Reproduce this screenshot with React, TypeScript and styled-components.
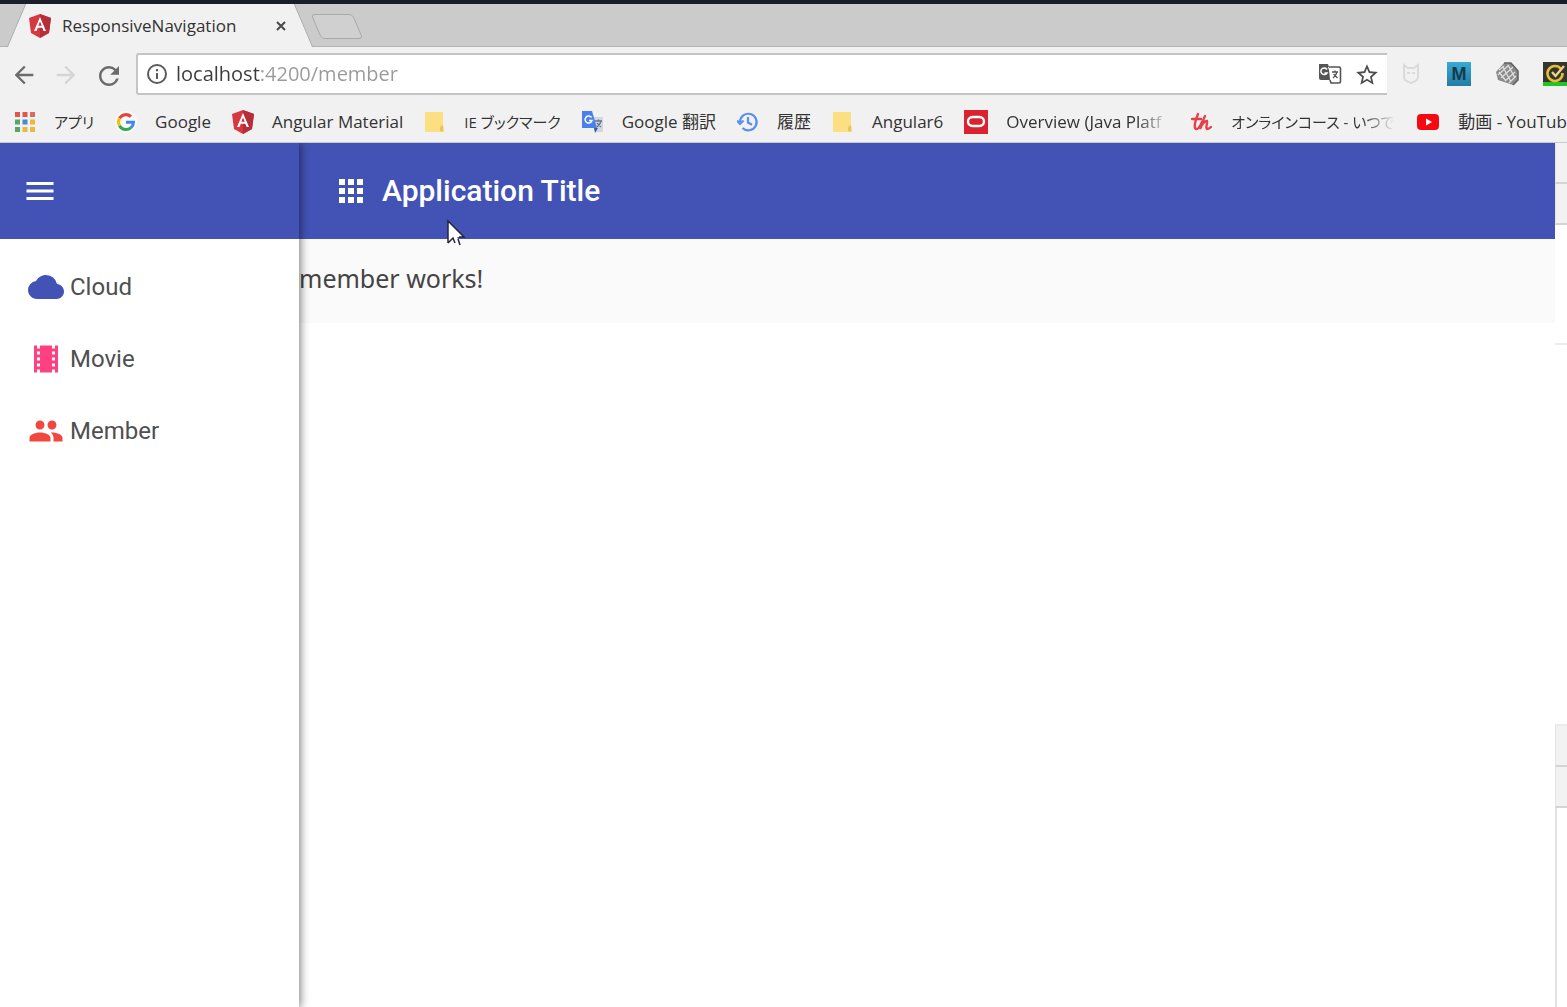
import React from "react";
import styled, { createGlobalStyle } from "styled-components";
import { MdApps, MdArrowBack, MdArrowForward, MdCloud, MdGroup, MdMenu, MdRefresh, MdStarBorder, MdTheaters } from "react-icons/md";

const chromeFont = `"Open Sans", "Noto Sans CJK JP", sans-serif`;
const appFont = `Roboto, "Liberation Sans", sans-serif`;

const GlobalStyle = createGlobalStyle`
  *, *::before, *::after { box-sizing: border-box; }
  body { margin: 0; background: #fff; overflow: hidden; }
  button { border: 0; padding: 0; background: none; font: inherit; color: inherit; cursor: pointer; }
  a { color: inherit; text-decoration: none; }
  p, h1 { margin: 0; }
  svg { display: block; flex: none; }
`;

const Window = styled.div`
  display: flex;
  flex-direction: column;
  min-height: 100vh;
  overflow: hidden;
  border-top: 4px solid #1b1d2b;
  font-family: ${chromeFont};
  color: #333;
`;

const TabStrip = styled.div`
  display: flex;
  height: 43px;
  padding-left: 16px;
  background: #cbcbcb;
  box-shadow: inset 0 -1px #b2b2b2;
`;

const Tab = styled.div`
  position: relative;
  z-index: 0;
  display: flex;
  align-items: center;
  width: 288px;
  padding: 0 15px 0 13px;
  font-size: 17px;

  &::before,
  &::after {
    content: "";
    position: absolute;
    z-index: -1;
    top: 0;
    bottom: 0;
    width: 60%;
    background: #f1f1f1;
  }
  &::before {
    left: 0;
    border-left: 1px solid #a5a5a5;
    transform: skewX(-23deg);
  }
  &::after {
    right: 0;
    border-right: 1px solid #a5a5a5;
    transform: skewX(23deg);
  }
`;

const TabTitle = styled.span`
  flex: 1;
  margin-left: 11px;
  white-space: nowrap;
`;

const CloseButton = styled.button`
  display: grid;
  place-items: center;
  width: 16px;
  height: 16px;
`;

const NewTab = styled.button`
  width: 42px;
  height: 25px;
  margin: 10px 0 0 12px;
  border: 1px solid #a9a9a9;
  border-radius: 4px;
  background: #d0d0d0;
  transform: skewX(23deg);
`;

const Toolbar = styled.div`
  display: flex;
  align-items: center;
  height: 54px;
  padding-left: 10px;
  background: #f1f1f1;
`;

const NavButton = styled.button<{ $dim?: boolean }>`
  display: grid;
  place-items: center;
  width: 26px;
  height: 26px;
  margin-right: 16px;
  color: ${(p) => (p.$dim ? "#d5d5d5" : "#6b6b6b")};
`;

const AddressBar = styled.form`
  display: flex;
  flex: 1;
  align-items: center;
  gap: 12px;
  height: 42px;
  padding: 0 9px 0 8px;
  border: 2px solid #c4c4c4;
  border-right: 0;
  border-radius: 3px 0 0 3px;
  background: #fff;
`;

const AddressInput = styled.input`
  flex: 1;
  min-width: 0;
  height: 36px;
  margin-left: -4px;
  padding: 0;
  border: 0;
  outline: 0;
  font: 20px/36px ${chromeFont};
  color: #9a9a9a;
  background: linear-gradient(90deg, #3b3b3b 84px, #9a9a9a 84px);
  background-clip: text;
  -webkit-text-fill-color: transparent;
`;

const IconButton = styled.button`
  display: grid;
  place-items: center;
  width: 24px;
  height: 24px;
  color: #4d4d4d;
`;

const Extensions = styled.div`
  display: flex;
  gap: 24px;
  padding-left: 12px;
`;

const LetterTile = styled.button`
  width: 24px;
  height: 24px;
  background: linear-gradient(#37abd3, #257ba3);
  font: bold 18px/24px "Liberation Sans", sans-serif;
  color: #153a4c;
  text-align: center;
`;

const Bookmarks = styled.nav`
  display: flex;
  gap: 21px;
  align-items: center;
  height: 42px;
  padding-left: 14px;
  border-bottom: 1px solid #c9c9d2;
  background: #f1f1f1;
`;

const Bookmark = styled.a`
  display: flex;
  flex: none;
  align-items: center;
  gap: 18px;
`;

const BookmarkLabel = styled.span<{ $fade?: boolean; $kana?: boolean }>`
  width: ${(p) => (p.$fade ? "164px" : "auto")};
  font-size: ${(p) => (p.$kana ? 15 : 17)}px;
  line-height: 24px;
  white-space: nowrap;
  font-feature-settings: "palt";
  mask-image: ${(p) => (p.$fade ? "linear-gradient(90deg, #000 80%, transparent)" : "none")};
`;

const Viewport = styled.div`
  display: flex;
  flex: 1;
`;

const SideNav = styled.aside`
  position: relative;
  z-index: 1;
  flex: none;
  width: 299px;
  background: #fff;
  box-shadow: 0 0 9px 1px rgba(0, 0, 0, 0.55);
  clip-path: inset(0 -12px 0 0);
  font-family: ${appFont};
`;

const AppBar = styled.header<{ $inset: number }>`
  display: flex;
  align-items: center;
  gap: 13px;
  height: 96px;
  padding: 0 ${(p) => p.$inset}px;
  background: #4353b5;
  color: #fff;
  font-family: ${appFont};
`;

const AppTitle = styled.h1`
  font-size: 30px;
  font-weight: 500;
  line-height: 36px;
`;

const NavList = styled.nav`
  display: flex;
  flex-direction: column;
  padding: 12px 28px;
`;

const NavItem = styled.a<{ $tint: string }>`
  display: flex;
  align-items: center;
  gap: 6px;
  height: 72px;
  font-size: 24px;
  line-height: 32px;
  color: #4f4f4f;

  svg { color: ${(p) => p.$tint}; }
`;

const Main = styled.main`
  flex: 1;
`;

const Message = styled.p`
  height: 84px;
  padding-top: 23px;
  background: #fafafa;
  font: 25px/32px "Noto Sans", sans-serif;
  color: #444;
`;

const DevTools = styled.aside`
  display: flex;
  flex-direction: column;
  flex: none;
  width: 12px;
`;

const DevBar = styled.div`
  height: 41px;
  border-bottom: 2px solid #d4d4d4;
  border-left: 1px solid #e4e4e4;
  background: #f2f2f2;
`;

const DevPane = styled.div<{ $height?: number }>`
  flex: ${(p) => (p.$height ? "none" : 1)};
  height: ${(p) => (p.$height ? `${p.$height}px` : "auto")};
  border-bottom: 2px solid #ebebeb;

  &:last-child {
    border-bottom: 0;
    border-left: 2px solid #e2e2e2;
  }
`;

const Pointer = styled.svg`
  position: absolute;
  z-index: 2;
  left: 446px;
  top: 219px;
`;

const AngularLogo = () => (
  <svg width="22" height="24" viewBox="0 0 22 24">
    <path d="M11 0l11 4-2 15-9 5-9-5L0 4z" fill="#d8383f" />
    <path d="M11 0l11 4-2 15-9 5z" fill="#b52f38" />
    <path d="M11 3l-6 14h2.500l1.300-3.300h4.500L14.600 17H17zM11 7.500l1.700 4.200H9.300z" fill="#fff" />
  </svg>
);

const AppsLogo = () => (
  <svg width="22" height="22" viewBox="0 0 22 22">
    {["#e2574c", "#e2574c", "#d96b62", "#5aa469", "#4c86d8", "#e8b93c", "#5aa469", "#e8b93c", "#e8b93c"].map((c, i) => (
      <rect key={i} x={1 + (i % 3) * 7.500} y={1 + Math.floor(i / 3) * 7.500} width="5" height="5" fill={c} />
    ))}
  </svg>
);

const GoogleLogo = () => (
  <svg width="22" height="22" viewBox="0 0 22 22">
    <circle cx="11" cy="11" r="11" fill="#fafafa" />
    <g fill="none" strokeWidth="3">
      <path d="M16 5.600A7.500 7.500 0 0 0 4.500 7.300" stroke="#ea4335" />
      <path d="M4.500 7.300a7.500 7.500 0 0 0 0 7.400" stroke="#fbbc05" />
      <path d="M4.500 14.700a7.500 7.500 0 0 0 11.500 2" stroke="#34a853" />
      <path d="M16 16.700a7.500 7.500 0 0 0 2.500-5.400H11" stroke="#4285f4" />
    </g>
  </svg>
);

const FolderLogo = () => (
  <svg width="22" height="22" viewBox="0 0 22 22">
    <path d="M1 1h18v14h1v6H1z" fill="#fbdf82" />
    <path d="M16 20v-4l3-2v7z" fill="#e8c560" />
  </svg>
);

const TranslateLogo = () => (
  <svg width="22" height="22" viewBox="0 0 22 22">
    <path d="M9 6h12v15h-8z" fill="#d4d6dc" />
    <path d="M0 0h10l5 17H0z" fill="#4a80ea" />
    <path d="M12 17h4l-3 5z" fill="#3659a8" />
    <path d="M9.500 6.500A3.500 3.500 0 1 0 10 9.500H7" fill="none" stroke="#fff" strokeWidth="1.500" />
    <path d="M13 10h7M16.500 8.500V10M19 10q-1 4-4 6M15 12l4 4" fill="none" stroke="#62769c" strokeWidth="1.300" />
  </svg>
);

const HistoryLogo = () => (
  <svg width="22" height="22" viewBox="0 0 22 22" fill="none" stroke="#5a8ff0" strokeWidth="2.200">
    <path d="M3 11a8.300 8.300 0 1 1 2.500 6" />
    <path d="M0 9.500l3 3.500 3.500-3.500" />
    <path d="M11 6v5.500l4 2.200" />
  </svg>
);

const OracleLogo = () => (
  <svg width="24" height="24" viewBox="0 0 24 24">
    <path d="M0 0h24v24H0z" fill="#d9232e" />
    <rect x="4" y="7" width="16" height="9" rx="4.500" fill="none" stroke="#fff" strokeWidth="2.400" />
  </svg>
);

const UdemyLogo = () => (
  <svg width="22" height="22" viewBox="0 0 22 22" fill="none" stroke="#e6404a" strokeWidth="2.400" strokeLinecap="round">
    <path d="M1 8h9M7 3C5 8 3 14 4 17c2 3 5-1 7-6" />
    <path d="M14 5c-2 4-4 9-5 13 2-5 4-8 7-8 1 2-2 6 0 8 1 0 3-1 4-2" />
  </svg>
);

const YouTubeLogo = () => (
  <svg width="24" height="22" viewBox="0 0 24 22">
    <rect x="1" y="3" width="22" height="16" rx="4" fill="#f40b12" />
    <path d="M10 7.500v7l6-3.500z" fill="#fff" />
  </svg>
);

const InfoGlyph = () => (
  <svg width="22" height="22" viewBox="0 0 22 22" fill="none" stroke="#5c5c5c" strokeWidth="2">
    <circle cx="11" cy="11" r="9" />
    <path d="M11 10v6M11 6v2.200" />
  </svg>
);

const PageTranslateGlyph = () => (
  <svg width="24" height="22" viewBox="0 0 24 22">
    <path d="M1 1h9l1 3h-1l4 13H3a2 2 0 0 1-2-2z" fill="#555" />
    <path d="M11 4h10a1.500 1.500 0 0 1 1.500 1.500v13A1.500 1.500 0 0 1 21 20h-8l-1-3" fill="#fff" stroke="#555" strokeWidth="1.600" />
    <path d="M9 6.500A3.300 3.300 0 1 0 9 10H6.500" fill="none" stroke="#fff" strokeWidth="1.500" />
    <path d="M14 9h6M17 7.500V9M19 9q-1 4-4 6M15.500 11l4 4" fill="none" stroke="#555" strokeWidth="1.300" />
  </svg>
);

const ShieldGlyph = () => (
  <svg width="24" height="24" viewBox="0 0 24 24" fill="none" stroke="#dadada" strokeWidth="2">
    <path d="M5 3l4 3h6l4-3v12c0 3-4 5-7 6-3-1-7-3-7-6z" />
    <path d="M8 11h3M13 11h3" />
  </svg>
);

const BallGlyph = () => (
  <svg width="24" height="24" viewBox="0 0 24 24" fill="none">
    <path d="M9 1h7l7 8v9l-5 5-6-2-9-3L1 10z" fill="#8b8b8b" />
    <path d="M4 8l5-4M3 13L14 3M6 16L18 5M10 19l10-9M14 21l7-7M8 5l8 15M13 3l7 13M4 10l7 9" stroke="#dedede" strokeWidth="1.300" />
    <path d="M9 1h7l7 8v9l-5 5" stroke="#606060" strokeWidth="1.500" />
  </svg>
);

const NortonGlyph = () => (
  <svg width="24" height="24" viewBox="0 0 24 24" fill="none">
    <path d="M0 0h24v24H0z" fill="#34352c" />
    <path d="M0 20h24v4H0z" fill="#21c422" />
    <path d="M18 7a7.500 7.500 0 1 0 1.500 4" stroke="#e6bd3c" strokeWidth="2.600" />
    <path d="M9 10l3.500 4L21 4" stroke="#f2d67d" strokeWidth="2.400" />
  </svg>
);

const bookmarks = [
  { label: "アプリ", Icon: AppsLogo, kana: true },
  { label: "Google", Icon: GoogleLogo },
  { label: "Angular Material", Icon: AngularLogo },
  { label: "IE ブックマーク", Icon: FolderLogo, kana: true },
  { label: "Google 翻訳", Icon: TranslateLogo },
  { label: "履歴", Icon: HistoryLogo },
  { label: "Angular6", Icon: FolderLogo },
  { label: "Overview (Java Platf", Icon: OracleLogo, fade: true },
  { label: "オンラインコース - いつで", Icon: UdemyLogo, fade: true, kana: true },
  { label: "動画 - YouTube", Icon: YouTubeLogo },
];

const sections = [
  { label: "Cloud", Icon: MdCloud, tint: "#4353b5" },
  { label: "Movie", Icon: MdTheaters, tint: "#ff4081" },
  { label: "Member", Icon: MdGroup, tint: "#f0483e" },
];

export default function App() {
  return (
    <Window>
      <GlobalStyle />
      <TabStrip>
        <Tab>
          <AngularLogo />
          <TabTitle>ResponsiveNavigation</TabTitle>
          <CloseButton aria-label="Close tab">
            <svg width="10" height="10" viewBox="0 0 10 10" stroke="#4a4a4a" strokeWidth="2">
              <path d="M1 1l8 8M9 1L1 9" />
            </svg>
          </CloseButton>
        </Tab>
        <NewTab aria-label="New tab" />
      </TabStrip>
      <Toolbar>
        <NavButton aria-label="Back"><MdArrowBack size={28} /></NavButton>
        <NavButton aria-label="Forward" $dim><MdArrowForward size={28} /></NavButton>
        <NavButton aria-label="Reload"><MdRefresh size={30} /></NavButton>
        <AddressBar onSubmit={(e) => e.preventDefault()}>
          <InfoGlyph />
          <AddressInput aria-label="Address" defaultValue="localhost:4200/member" spellCheck={false} />
          <IconButton type="button" aria-label="Translate page"><PageTranslateGlyph /></IconButton>
          <IconButton type="button" aria-label="Bookmark page"><MdStarBorder size={26} /></IconButton>
        </AddressBar>
        <Extensions>
          <IconButton aria-label="Shield"><ShieldGlyph /></IconButton>
          <LetterTile>M</LetterTile>
          <IconButton aria-label="Network"><BallGlyph /></IconButton>
          <IconButton aria-label="Safe web"><NortonGlyph /></IconButton>
        </Extensions>
      </Toolbar>
      <Bookmarks>
        {bookmarks.map(({ label, Icon, fade, kana }) => (
          <Bookmark key={label} href="#">
            <Icon />
            <BookmarkLabel $fade={fade} $kana={kana}>{label}</BookmarkLabel>
          </Bookmark>
        ))}
      </Bookmarks>
      <Viewport>
        <SideNav>
          <AppBar $inset={22}>
            <button aria-label="Menu"><MdMenu size={36} /></button>
          </AppBar>
          <NavList>
            {sections.map(({ label, Icon, tint }) => (
              <NavItem key={label} href="#" $tint={tint}>
                <Icon size={36} />
                {label}
              </NavItem>
            ))}
          </NavList>
        </SideNav>
        <Main>
          <AppBar $inset={34}>
            <MdApps size={36} />
            <AppTitle>Application Title</AppTitle>
          </AppBar>
          <Message>member works!</Message>
        </Main>
        <DevTools>
          <DevBar />
          <DevBar />
          <DevPane $height={120} />
          <DevPane />
          <DevBar />
          <DevBar />
          <DevPane $height={199} />
        </DevTools>
      </Viewport>
      <Pointer width="20" height="28" viewBox="0 0 20 28">
        <path d="M2 2v22l5-5 3 7 4-2-3-6h7z" fill="#fff" />
        <path d="M2 24V2l16 16h-5M2 24l5-5 2 5M12 20l2 6" fill="none" stroke="#26263a" strokeWidth="1.500" />
      </Pointer>
    </Window>
  );
}
